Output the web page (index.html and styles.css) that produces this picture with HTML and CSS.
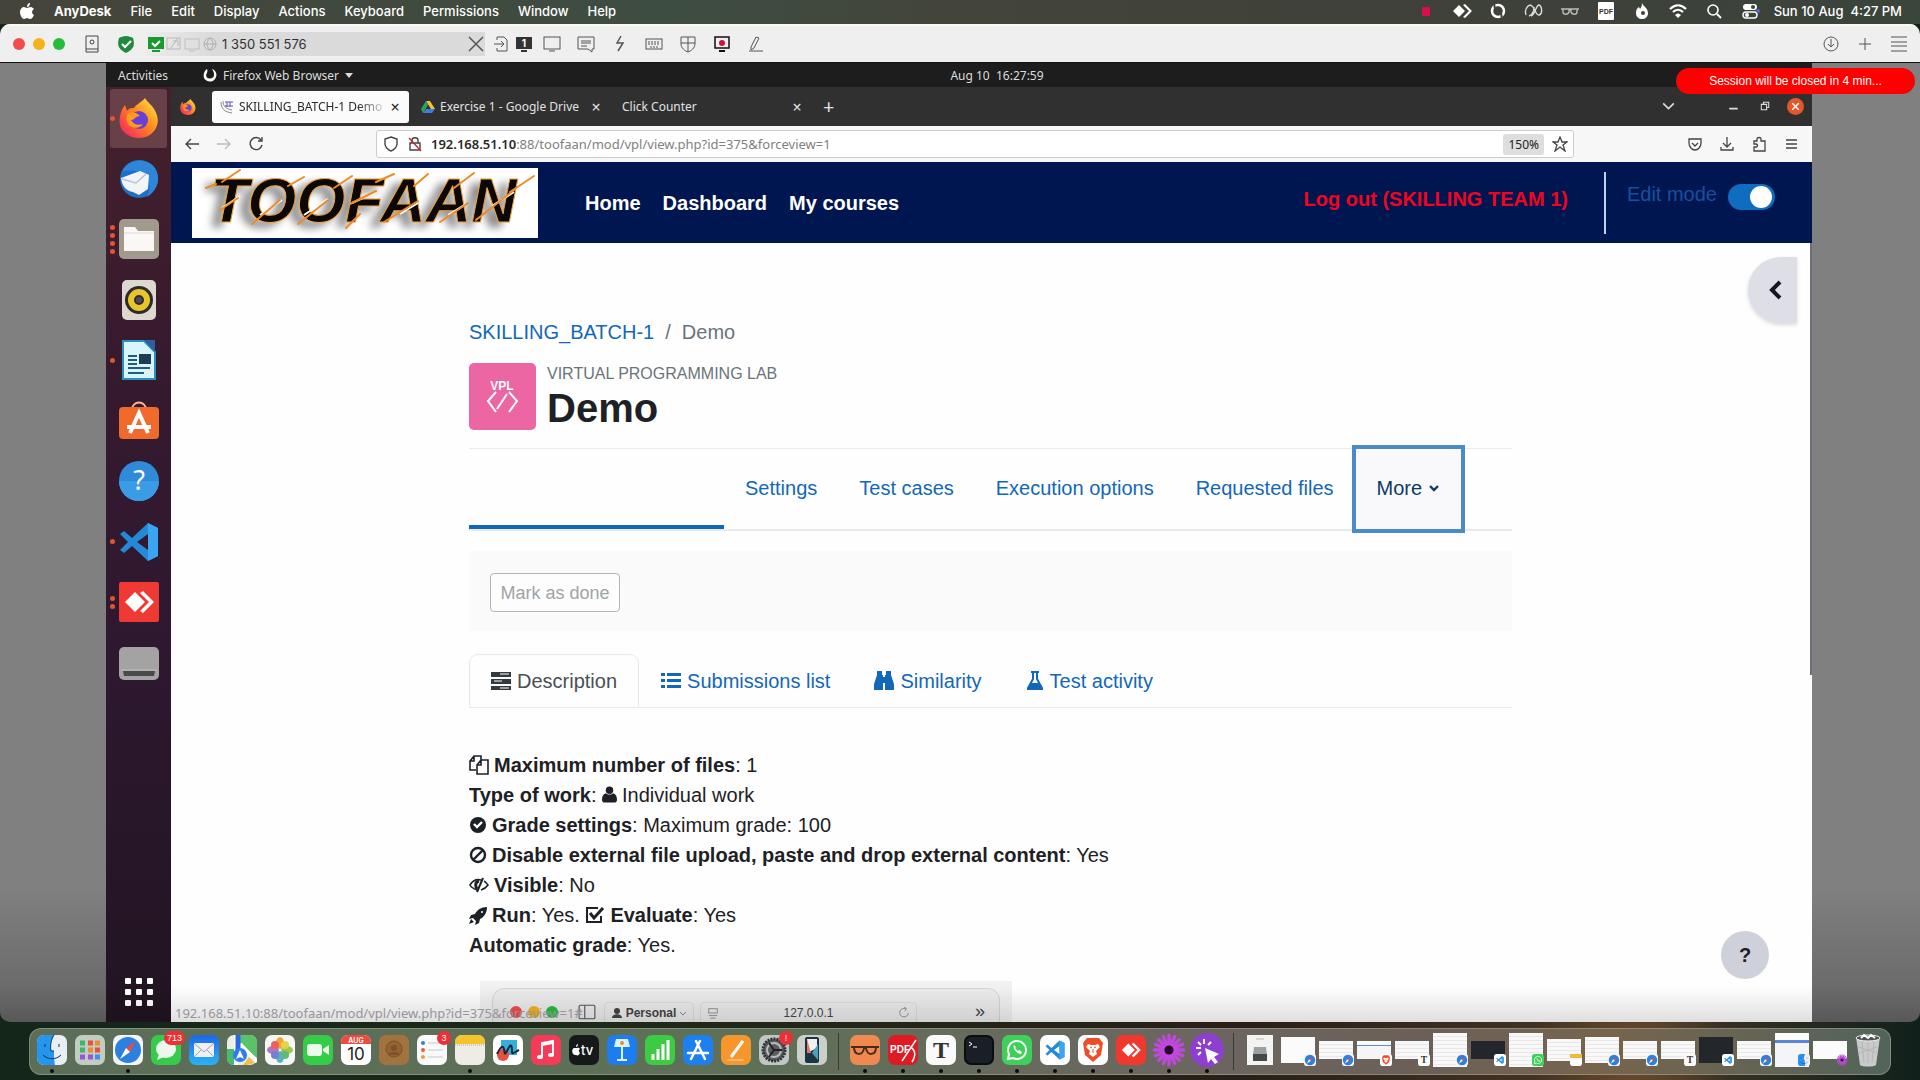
FILE: index.html
```html
<!DOCTYPE html>
<html lang="en">
<head>
    <meta charset="UTF-8">
    <title>Demo - Virtual programming lab</title>
    <link rel="stylesheet" href="styles.css">
</head>
<body>
    <!-- shared icons -->
    <svg class="sprite" aria-hidden="true">
        <defs>
            <linearGradient id="fire" x1="1" y1="0" x2="0" y2="1"><stop offset="0" stop-color="#fff04a"/><stop offset=".45" stop-color="#ff8a1c"/><stop offset="1" stop-color="#f5156c"/></linearGradient>
            <linearGradient id="blue" x1="0" y1="0" x2="0" y2="1"><stop offset="0" stop-color="#1e66e8"/><stop offset="1" stop-color="#27b4f5"/></linearGradient>
        </defs>
        <symbol id="i-firefox" viewBox="0 0 40 40">
            <path d="M26 0c3 5 6 6 9 11 4 6 5 13 2 19-3 6-9 10-17 10S5 36 2 30C-1 23 1 13 6 7l2 6c2-3 4-3 7-3 2-4 7-5 11-10z" fill="url(#fire)"/>
            <circle cx="20" cy="22" r="9" fill="#6a3fd8"/>
            <path d="M9 15c5-2 9 0 12 3-5 0-5 4-9 4 2 4 7 6 12 4-3 5-11 5-15 0-2-3-2-8 0-11z" fill="#ff9a1f"/>
        </symbol>
        <symbol id="i-vscode" viewBox="0 0 40 40">
            <path d="M29 1l10 5v28l-10 5L13 24l-8 7-4-3 8-8-8-8 4-3 8 7zm0 11L18 20l11 8z" fill="#2489d8"/>
            <path d="M29 1l10 5v28l-10 5z" fill="#3aa6f2"/>
        </symbol>
        <symbol id="i-anydesk" viewBox="0 0 40 40">
            <path d="M6 20l10-10 10 10-10 10z" fill="#fff"/><path d="M21 11l3-2 11 11-11 11-3-2 9-9z" fill="#fff"/>
        </symbol>
        <symbol id="i-safari" viewBox="0 0 30 30">
            <rect width="30" height="30" rx="7" fill="#f2f4f6"/><circle cx="15" cy="15" r="13" fill="#2b80e0"/>
            <path d="M23 6l-6 11-4-4z" fill="#f1483f"/><path d="M7 24l6-11 4 4z" fill="#fff"/>
        </symbol>
        <symbol id="i-brave" viewBox="0 0 30 30">
            <rect width="30" height="30" rx="7" fill="#fff"/><path d="M9 3h12l4 5-2 12-8 7-8-7L5 8z" fill="#ee4d27"/>
            <path d="M10 9l3 1h4l3-1 2 3-4 4 1 3-4 3-4-3 1-3-4-4z" fill="#fff"/><path d="M12 12l2 1M18 12l-2 1M15 14v4" stroke="#ee4d27"/>
        </symbol>
        <symbol id="i-flower" viewBox="0 0 30 30">
            <g stroke="#c048dd" stroke-width="3" stroke-linecap="round"><path d="M15 2v26M2 15h26M6 6l18 18M24 6L6 24M10 3l10 24M20 3L10 27M3 10l24 10M3 20l24-10"/></g>
            <circle cx="15" cy="15" r="4" fill="#28092e"/>
        </symbol>
        <symbol id="i-typora" viewBox="0 0 30 30">
            <rect width="30" height="30" rx="7" fill="#fafafa"/><text x="15" y="23" text-anchor="middle" font-family="Liberation Serif" font-size="24" font-weight="700" fill="#333">T</text>
        </symbol>
        <symbol id="i-whatsapp" viewBox="0 0 30 30">
            <rect width="30" height="30" rx="7" fill="#3fd05a"/><path d="M6 24l1-5a9 9 0 1 1 4 4z" fill="none" stroke="#fff" stroke-width="2"/>
            <path d="M12 10c-2 3 3 9 7 9l1-2-3-2-1 1-3-3 1-1z" fill="#fff"/>
        </symbol>
        <symbol id="i-finder" viewBox="0 0 30 30">
            <rect width="30" height="30" rx="7" fill="#e7eef5"/><path d="M7 0h10c-3 5-4 10-3 16h3c0 5 0 9 1 14H7a7 7 0 0 1-7-7V7a7 7 0 0 1 7-7z" fill="#2496ef"/>
            <path d="M8 9v3M22 9v3M6 20c5 5 13 5 18 0M17 0c-3 5-4 10-3 16h3" fill="none" stroke="#17324a" stroke-width="1"/>
        </symbol>
    </svg>

    <header class="menubar">
        <svg class="apple" viewBox="0 0 14 16"><path d="M10 0c0 2-1 4-3 4 0-2 1-4 3-4zM7 5c1 0 2-1 4-1 1 0 2 1 3 2-3 2-2 5 0 6-1 2-2 4-4 4-1 0-2-1-3-1s-2 1-3 1C2 16 0 12 0 9c0-3 2-5 4-5 1 0 2 1 3 1z" fill="#fff"/></svg>
        <nav class="menus">
            <button class="app-name">AnyDesk</button>
            <button>File</button>
            <button>Edit</button>
            <button>Display</button>
            <button>Actions</button>
            <button>Keyboard</button>
            <button>Permissions</button>
            <button>Window</button>
            <button>Help</button>
        </nav>
        <div class="tray">
            <svg viewBox="0 0 20 20"><rect x="6" y="6" width="8" height="9" rx="1" fill="#d80f4c"/></svg>
            <svg viewBox="0 0 20 20"><path d="M1 10l6-6 6 6-6 6zM11 4l2-1 7 7-7 7-2-1 6-6z" fill="#fff"/></svg>
            <svg viewBox="0 0 20 20"><circle cx="10" cy="10" r="6" fill="none" stroke="#fff" stroke-width="2.5"/><path d="M6 2l1 6M14 18l-1-6" stroke="#43433d" stroke-width="2"/></svg>
            <svg viewBox="0 0 20 20"><path d="M2 14C0 8 5 2 8 5c3 2 4 10 7 9 4-1 3-9 0-10-3 0-4 10-8 11M10 6c0 4-2 8-5 9" fill="none" stroke="#ddd" stroke-width="1.4"/></svg>
            <svg viewBox="0 0 20 20"><path d="M1 8h18M3 8v3c0 3 5 3 6 0V9h2v2c1 3 6 3 6 0V8" fill="none" stroke="#bbb" stroke-width="1.4"/></svg>
            <svg viewBox="0 0 20 20"><rect x="2" y="1" width="16" height="18" rx="1" fill="#fff"/><text x="10" y="13" text-anchor="middle" font-family="Liberation Sans" font-size="7" font-weight="700" fill="#333">PDF</text></svg>
            <svg viewBox="0 0 20 20"><path d="M10 2c1 3 6 5 6 10 0 4-3 6-6 6s-6-2-6-6c0-3 1-5 3-6l1 2c1-1 2-3 2-6z" fill="#fff"/><circle cx="11" cy="12" r="2" fill="#43433d"/></svg>
            <svg viewBox="0 0 20 20"><path d="M2 8c5-5 11-5 16 0M5 11c3-3 7-3 10 0" fill="none" stroke="#fff" stroke-width="2.2"/><path d="M7 14c2-2 4-2 6 0l-3 3z" fill="#fff"/></svg>
            <svg viewBox="0 0 20 20"><circle cx="9" cy="9" r="5" fill="none" stroke="#fff" stroke-width="1.6"/><path d="M13 13l4 4" stroke="#fff" stroke-width="2"/></svg>
            <svg viewBox="0 0 20 20"><rect x="3" y="3" width="14" height="6" rx="3" fill="#fff"/><circle cx="13" cy="6" r="2" fill="#43433d"/><rect x="3" y="11" width="14" height="6" rx="3" fill="none" stroke="#fff" stroke-width="1.4"/><circle cx="7" cy="14" r="2" fill="#fff"/><circle cx="18" cy="10" r="2" fill="#6259e0"/></svg>
        </div>
        <span class="mac-clock">Sun 10 Aug&nbsp; 4:27 PM</span>
    </header>

    <div class="anydesk">
        <div class="toolbar">
            <div class="lights"><i class="red"></i><i class="yellow"></i><i class="green"></i></div>
            <svg class="book" viewBox="0 0 18 18"><path d="M3 1h12v16H3zM3 14h12" fill="none" stroke="#444"/><circle cx="9" cy="7" r="2" fill="none" stroke="#444"/></svg>
            <svg class="secure" viewBox="0 0 18 18"><path d="M9 1c3 0 5 1 7 2 2 7 1 11-7 15C1 14 0 10 2 3c2-1 4-2 7-2z" fill="#1f8a3b"/><path d="M5 9l3 3 6-6" fill="none" stroke="#fff" stroke-width="2"/></svg>
            <label class="address">
                <svg viewBox="0 0 18 18"><rect x="1" y="2" width="16" height="12" fill="#189a2c"/><path d="M5 8l3 3 5-5" fill="none" stroke="#fff" stroke-width="2"/><path d="M5 16h8" stroke="#189a2c" stroke-width="2"/></svg>
                <svg viewBox="0 0 18 18" fill="none" stroke="#b8b8b8"><rect x="2" y="3" width="13" height="11"/><path d="M5 14l8-11M8 6h5v5"/></svg>
                <svg viewBox="0 0 18 18" fill="none" stroke="#c0c0c0"><rect x="2" y="4" width="14" height="10"/><path d="M6 16h6"/></svg>
                <svg viewBox="0 0 18 18" fill="none" stroke="#b0b0b0"><circle cx="9" cy="9" r="6"/><path d="M3 9h12M9 3c-4 4-4 8 0 12 4-4 4-8 0-12"/></svg>
                <input type="text" value="1 350 551 576" aria-label="Remote address">
                <button aria-label="Disconnect"><svg viewBox="0 0 18 18"><path d="M2 2l14 14M16 2L2 16" stroke="#555" stroke-width="1.5"/></svg></button>
            </label>
            <div class="tools">
                <button class="narrow" aria-label="File transfer"><svg viewBox="0 0 18 18" fill="none" stroke="#555"><path d="M4 5V2h7l3 3v11H4v-3M1 9h9M8 6l3 3-3 3"/></svg></button>
                <button class="narrow" aria-label="Monitor 1"><svg viewBox="0 0 18 18"><rect x="1" y="2" width="16" height="12" fill="#333"/><path d="M6 16h6" stroke="#333" stroke-width="2"/><text x="9" y="12" text-anchor="middle" font-family="Inter" font-size="10" font-weight="700" fill="#fff">1</text></svg></button>
                <button aria-label="Screen"><svg viewBox="0 0 18 18" fill="none" stroke="#555"><rect x="1" y="2" width="16" height="12"/><path d="M6 16h6"/></svg></button>
                <button aria-label="Chat"><svg viewBox="0 0 18 18" fill="none" stroke="#555"><path d="M1 2h16v12h-2v3l-4-3H1zM4 6h10M4 8h10M4 11h6"/></svg></button>
                <button aria-label="Actions"><svg viewBox="0 0 18 18" fill="none" stroke="#555" stroke-width="1.5"><path d="M10 1L6 8h6l-5 8"/></svg></button>
                <button aria-label="Keyboard"><svg viewBox="0 0 18 18" fill="none" stroke="#555"><rect x="1" y="4" width="16" height="10"/><path d="M3 7h12M3 9h12M5 12h8" stroke-dasharray="2 1"/></svg></button>
                <button aria-label="Permissions"><svg viewBox="0 0 18 18" fill="none" stroke="#555"><path d="M2 2h14v7c0 4-4 7-7 8-3-1-7-4-7-8zM9 2v15M2 8h14"/></svg></button>
                <button aria-label="Record"><svg viewBox="0 0 18 18"><rect x="2" y="2" width="14" height="11" fill="none" stroke="#111" stroke-width="1.5"/><path d="M6 16h6" stroke="#111" stroke-width="2"/><circle cx="9" cy="8" r="3" fill="#cf1238"/></svg></button>
                <button aria-label="Whiteboard"><svg viewBox="0 0 18 18" fill="none" stroke="#555"><path d="M4 12L9 2l3 1-5 10-3 2zM2 16h14"/></svg></button>
            </div>
            <div class="tools tools-right">
                <button aria-label="Install"><svg viewBox="0 0 18 18" fill="none" stroke="#555"><circle cx="9" cy="9" r="7"/><path d="M9 4v7M6 9l3 3 3-3"/></svg></button>
                <button aria-label="New"><svg viewBox="0 0 18 18" stroke="#555"><path d="M9 3v12M3 9h12"/></svg></button>
                <button aria-label="Menu"><svg viewBox="0 0 18 18" stroke="#555"><path d="M1 2h16M1 7h16M1 11h16M1 16h16"/></svg></button>
            </div>
        </div>

        <div class="viewport">
            <div class="session-note">Session will be closed in 4 min...</div>

            <div class="desktop">
                <div class="topbar">
                    <div class="topbar-left">
                        <span>Activities</span>
                        <span class="current-app">
                            <svg viewBox="0 0 14 14"><path d="M4 1c-3 2-4 6-3 9 2 4 8 5 11 1 3-4 1-9-3-10 1 2 2 3 2 5a4 4 0 0 1-8 1c1-2 2-4 1-6z" fill="#fff"/></svg>
                            Firefox Web Browser
                            <i class="caret"></i>
                        </span>
                    </div>
                    <span>Aug 10&nbsp; 16:27:59</span>
                </div>

                <div class="workspace">
                    <aside class="launcher">
                        <div class="launcher-apps">
                            <button class="active" aria-label="Firefox"><span class="dots"><i></i></span><svg viewBox="0 0 40 40"><use href="#i-firefox"/></svg></button>
                            <button aria-label="Thunderbird"><svg viewBox="0 0 40 40"><circle cx="20" cy="20" r="19" fill="#1c70c8"/><path d="M3 13C9 0 28-2 36 9c6 10 3 21-8 29 5-10 3-20-6-24-7-3-14-3-19-1z" fill="#2f86d8"/><path d="M2 19l19-7 9 4-1 14-9 6-6-3C7 32 3 27 2 19z" fill="#f2f4f8"/><path d="M3 20l14 4 10-9" fill="none" stroke="#b7c4d6" stroke-width="1.5"/></svg></button>
                            <button aria-label="Files"><span class="dots"><i></i><i></i><i></i><i></i></span><svg viewBox="0 0 40 40"><rect width="40" height="40" rx="5" fill="#a09a8c"/><path d="M5 8h11l3 4h16v20H5z" fill="#fbf7f5"/><path d="M5 14h30" stroke="#e2dcd8"/></svg></button>
                            <button aria-label="Rhythmbox"><svg viewBox="0 0 40 40"><rect x="3" width="34" height="40" rx="5" fill="#ddd8d0"/><circle cx="20" cy="20" r="14" fill="#2d2b2a"/><circle cx="20" cy="20" r="8" fill="none" stroke="#e9c52c" stroke-width="6"/><circle cx="20" cy="20" r="3" fill="#4a4a5a"/></svg></button>
                            <button aria-label="Writer"><span class="dots"><i></i></span><svg viewBox="0 0 40 40"><path d="M4 1h21l11 11v27H4z" fill="#d9f4fb" stroke="#2692c4" stroke-width="2"/><path d="M25 0h11v12z" fill="#2c5f9e"/><path d="M9 16h9M9 20h9M9 24h9M9 28h22M9 33h16" stroke="#205c7e" stroke-width="2"/><path d="M20 14h12v10H20z" fill="#1b3d55"/></svg></button>
                            <button aria-label="Software"><svg viewBox="0 0 40 40"><path d="M13 9c0-10 14-10 14 0" fill="none" stroke="#f4b79a" stroke-width="2"/><rect y="6" width="40" height="32" rx="4" fill="#f06a2c"/><path d="M11 32l9-20 9 20M8 26h24" fill="none" stroke="#fff" stroke-width="4"/></svg></button>
                            <button aria-label="Help"><svg viewBox="0 0 40 40"><circle cx="20" cy="20" r="20" fill="#2f8ad8"/><path d="M0 20h40a20 20 0 0 1-40 0z" fill="#3a9ce6"/><text x="20" y="29" text-anchor="middle" font-family="Noto Sans" font-size="27" fill="#fff">?</text></svg></button>
                            <button aria-label="Visual Studio Code"><span class="dots"><i></i></span><svg viewBox="0 0 40 40"><use href="#i-vscode"/></svg></button>
                            <button aria-label="AnyDesk"><span class="dots"><i></i><i></i></span><svg viewBox="0 0 40 40"><rect width="40" height="40" rx="2" fill="#ef3a34"/><use href="#i-anydesk"/></svg></button>
                            <button aria-label="Disk"><svg viewBox="0 0 40 40"><rect y="4" width="40" height="33" rx="5" fill="#a3a3a3"/><path d="M4 28h32l-1 5H5z" fill="#4a4a4a"/><path d="M2 27h36" stroke="#bdbdbd"/></svg></button>
                        </div>
                        <button class="show-apps" aria-label="Show Applications"><i></i><i></i><i></i><i></i><i></i><i></i><i></i><i></i><i></i></button>
                    </aside>

                    <div class="browser">
                        <div class="tabstrip">
                            <div class="pinned"><svg viewBox="0 0 40 40"><use href="#i-firefox"/></svg></div>
                            <div class="tab selected">
                                <svg viewBox="0 0 14 14"><path d="M1 2c0 6 3 10 11 11M3 1c0 5 3 8 9 9" fill="none" stroke="#888"/><path d="M5 2h8M7 2v5M10 2v5M5 6h8" stroke="#5a55b0"/></svg>
                                <span class="title">SKILLING_BATCH-1 Demo</span>
                                <button aria-label="Close tab">×</button>
                            </div>
                            <div class="tab">
                                <svg viewBox="0 0 14 14"><path d="M5 1h4l5 8h-4z" fill="#f7c32e"/><path d="M5 1L0 9l2 4 5-8z" fill="#2aa65a"/><path d="M2 13h9l3-4H5z" fill="#3a7de8"/></svg>
                                <span class="title">Exercise 1 - Google Drive</span>
                                <button aria-label="Close tab">×</button>
                            </div>
                            <div class="tab">
                                <span class="title">Click Counter</span>
                                <button aria-label="Close tab">×</button>
                            </div>
                            <button class="new-tab" aria-label="New tab">+</button>
                            <div class="window-buttons">
                                <button class="list-tabs" aria-label="List tabs"><svg viewBox="0 0 16 16"><path d="M3 5l5 5 5-5" fill="none" stroke="#ddd" stroke-width="1.5"/></svg></button>
                                <button aria-label="Minimize"><svg viewBox="0 0 16 16"><path d="M4 10h8" stroke="#ddd" stroke-width="1.5"/></svg></button>
                                <button aria-label="Restore"><svg viewBox="0 0 16 16" fill="none" stroke="#ddd"><path d="M5 6h5v5H5zM7 6V4h5v5h-2"/></svg></button>
                                <button aria-label="Close"><svg viewBox="0 0 16 16"><circle cx="8" cy="8" r="8" fill="#e4572c"/><path d="M5 5l6 6M11 5l-6 6" stroke="#fff" stroke-width="1.4"/></svg></button>
                            </div>
                        </div>

                        <div class="navbar">
                            <div class="nav-buttons">
                                <button aria-label="Back"><svg viewBox="0 0 16 16" fill="none" stroke="#444" stroke-width="1.4"><path d="M15 8H2M7 3L2 8l5 5"/></svg></button>
                                <button aria-label="Forward"><svg viewBox="0 0 16 16" fill="none" stroke="#bbb" stroke-width="1.4"><path d="M1 8h13M9 3l5 5-5 5"/></svg></button>
                                <button aria-label="Reload"><svg viewBox="0 0 16 16" fill="none" stroke="#444" stroke-width="1.4"><path d="M13 4a6 6 0 1 0 1 5M14 1v4h-4"/></svg></button>
                            </div>
                            <div class="urlbar">
                                <svg viewBox="0 0 16 16" fill="none" stroke="#444" stroke-width="1.4"><path d="M8 1l6 2v5c0 3-3 6-6 7-3-1-6-4-6-7V3z"/></svg>
                                <svg viewBox="0 0 16 16" fill="none" stroke="#444" stroke-width="1.4"><path d="M3 7h10v7H3zM5 7V4c0-3 6-3 6 0v3"/><path d="M2 2l12 13" stroke="#d0203e"/></svg>
                                <span class="url"><b>192.168.51.10</b>:88/toofaan/mod/vpl/view.php?id=375&amp;forceview=1</span>
                                <button class="zoom">150%</button>
                                <svg viewBox="0 0 16 16" fill="none" stroke="#444" stroke-width="1.3"><path d="M8 1l2 5h5l-4 3 2 6-5-4-5 4 2-6-4-3h5z"/></svg>
                            </div>
                            <div class="nav-buttons nav-extra">
                                <button aria-label="Pocket"><svg viewBox="0 0 16 16" fill="none" stroke="#444" stroke-width="1.3"><path d="M2 3h12v4c0 4-3 7-6 7S2 11 2 7zM5 7l3 3 3-3"/></svg></button>
                                <button aria-label="Downloads"><svg viewBox="0 0 16 16" fill="none" stroke="#444" stroke-width="1.3"><path d="M8 1v9M4 7l4 4 4-4M2 11v3h12v-3"/></svg></button>
                                <button aria-label="Extensions"><svg viewBox="0 0 16 16" fill="none" stroke="#444" stroke-width="1.3"><path d="M3 5h3V3c0-2 4-2 4 0v2h4v10H3v-4h2c2 0 2-3 0-3H3z"/></svg></button>
                                <button aria-label="Menu"><svg viewBox="0 0 16 16" stroke="#444" stroke-width="1.3"><path d="M3 4h11M3 8h11M3 12h11"/></svg></button>
                            </div>
                        </div>

                        <div class="page">
                            <header class="site-header">
                                <a href="#" class="logo" aria-label="Toofaan">
                                    <svg viewBox="0 0 346 70">
                                        <rect width="346" height="70" fill="#fff"/>
                                        <text x="18" y="54" class="logo-text">TOOFAAN</text>
                                        <g stroke="#fff" stroke-width="2"><path d="M30 40l18-12M68 47l22-15M112 47l24-16M160 35l24-11M208 46l18-11M256 47l18-11M300 38l22-14"/></g>
                                        <g stroke="#f08a26" stroke-width="2" stroke-linecap="round"><path d="M14 20l10-4M30 14l18-12M28 42l18-12M60 56l28-24M96 18l16-9M106 56l30-24M142 20l18-12M154 60l14-14M158 36l26-13M184 14l18-8M192 54l34-21M222 18l14-12M248 54l28-19M262 20l20-15M284 52l38-30M318 24l24-16"/></g>
                                    </svg>
                                </a>
                                <nav class="site-nav">
                                    <a href="#">Home</a>
                                    <a href="#">Dashboard</a>
                                    <a href="#">My courses</a>
                                </nav>
                                <a href="#" class="logout">Log out (SKILLING TEAM 1)</a>
                                <div class="edit-mode">
                                    <label for="editMode">Edit mode</label>
                                    <input type="checkbox" id="editMode" checked>
                                </div>
                            </header>

                            <button class="drawer-toggle" aria-label="Open block drawer"><svg viewBox="0 0 16 20"><path d="M12 2L4 10l8 8" fill="none" stroke="#16161e" stroke-width="4"/></svg></button>
                            <div class="scrollbar"></div>

                            <main class="content">
                                <div class="breadcrumb"><a href="#">SKILLING_BATCH-1</a><span>/</span><span>Demo</span></div>
                                <div class="activity-title">
                                    <svg viewBox="0 0 67 67"><rect width="67" height="67" rx="5" fill="#eb66a2"/><text x="33" y="27" text-anchor="middle" font-family="Liberation Sans" font-size="12" font-weight="700" fill="#fff">VPL</text><path d="M27 29l-8 9 8 11M40 29l8 9-8 11M38 31L28 46" fill="none" stroke="#fff" stroke-width="2"/></svg>
                                    <div>
                                        <div class="activity-type">Virtual programming lab</div>
                                        <h1>Demo</h1>
                                    </div>
                                </div>

                                <nav class="secondary-nav">
                                    <a href="#" class="current" aria-label="Virtual programming lab"></a>
                                    <a href="#">Settings</a>
                                    <a href="#">Test cases</a>
                                    <a href="#">Execution options</a>
                                    <a href="#">Requested files</a>
                                    <button class="more">More <svg viewBox="0 0 12 12"><path d="M2 4l4 4 4-4" fill="none" stroke="#0b3a66" stroke-width="2.4"/></svg></button>
                                </nav>

                                <div class="activity-header">
                                    <button disabled>Mark as done</button>
                                </div>

                                <nav class="tabs">
                                    <a href="#" class="current"><svg viewBox="0 0 20 20"><path d="M0 1h20v5H0zM0 8h20v5H0zM0 15h20v4H0z" fill="#343a40"/><path d="M9 3h9M3 10h8M9 17h9" stroke="#fff" stroke-width="1"/></svg>Description</a>
                                    <a href="#"><svg viewBox="0 0 20 20" fill="#1268b8"><path d="M0 2h4v3H0zM0 8h4v3H0zM0 14h4v3H0zM6 2h14v3H6zM6 8h14v3H6zM6 14h14v3H6z"/></svg>Submissions list</a>
                                    <a href="#"><svg viewBox="0 0 20 20" fill="#1268b8"><path d="M3 0h5v4h1v15H0v-6l3-9zM12 0h5v4l3 9v6h-9V4h1zM8 6h4v6H8z"/></svg>Similarity</a>
                                    <a href="#"><svg class="flask" viewBox="0 0 18 20"><path d="M5 1h8M7 1v7L2 17v1h14v-1l-5-9V1" fill="none" stroke="#1268b8" stroke-width="2"/><path d="M5 12h8l4 7H1z" fill="#1268b8"/></svg>Test activity</a>
                                </nav>

                                <div class="details">
                                    <p><svg viewBox="0 0 20 20" fill="none" stroke="#1d2125" stroke-width="1.6"><path d="M7 15H1V6l4-5h7v4M5 1v5H1M8 10l4-5h7v14H8zM12 5v5H8"/></svg><b>Maximum number of files</b>: 1</p>
                                    <p><b>Type of work</b>: <svg class="small" viewBox="0 0 16 20" fill="#1d2125"><circle cx="8" cy="5" r="4"/><path d="M4 8c2 2 6 2 8 0 3 1 4 4 4 7 0 2-1 3-3 3H3c-2 0-3-1-3-3 0-3 1-6 4-7z"/></svg>Individual work</p>
                                    <p><svg class="mid" viewBox="0 0 18 20"><circle cx="9" cy="10" r="8" fill="#1d2125"/><path d="M5 9l3 3 5-5" fill="none" stroke="#fff" stroke-width="2.4"/></svg><b>Grade settings</b>: Maximum grade: 100</p>
                                    <p><svg class="mid" viewBox="0 0 18 20" fill="none" stroke="#1d2125" stroke-width="2.4"><circle cx="9" cy="10" r="7"/><path d="M4 15L14 5"/></svg><b>Disable external file upload, paste and drop external content</b>: Yes</p>
                                    <p><svg viewBox="0 0 20 20" fill="none" stroke="#1d2125" stroke-width="1.6"><path d="M8 15C5 14 2 12 1 10c3-5 7-6 11-5M15 6c2 1 3 3 4 4-2 3-4 4-7 5"/><path d="M14 3L8 17" stroke-width="2"/><path d="M10 6c-4 1-4 5-2 8" stroke-width="3"/></svg><b>Visible</b>: No</p>
                                    <p><svg class="mid" viewBox="0 0 18 20"><path d="M18 2c-6 0-10 3-12 7l-4 1-2 4 4-1 3 3-1 4 4-2 1-4c4-2 7-6 7-12zM0 19l2-5 3 3z" fill="#1d2125"/><circle cx="13" cy="7" r="1" fill="#fff"/></svg><b>Run</b>: Yes. <svg viewBox="0 0 20 20" fill="none" stroke="#1d2125"><path d="M16 11v6H2V3h11" stroke-width="2"/><path d="M5 8l4 5 9-10" stroke-width="3"/></svg><b>Evaluate</b>: Yes</p>
                                    <p><b>Automatic grade</b>: Yes.</p>
                                </div>

                                <div class="shot">
                                    <div class="shot-bar">
                                        <div class="lights"><i class="red"></i><i class="yellow"></i><i class="green"></i></div>
                                        <svg viewBox="0 0 16 16" fill="none" stroke="#555"><rect x="1" y="2" width="14" height="12" rx="1"/><path d="M6 2v12"/></svg>
                                        <span class="profile"><svg viewBox="0 0 12 12" fill="#444"><circle cx="6" cy="4" r="3"/><path d="M1 11c0-5 10-5 10 0z"/></svg>Personal<svg class="drop" viewBox="0 0 8 8"><path d="M1 3l3 3 3-3" fill="none" stroke="#888"/></svg></span>
                                        <span class="host"><svg viewBox="0 0 14 14" fill="none" stroke="#888"><rect x="2" y="2" width="10" height="5"/><path d="M2 10h10M4 13h6"/></svg><em>127.0.0.1</em><svg viewBox="0 0 14 14" fill="none" stroke="#888"><path d="M12 7a5 5 0 1 1-3-5M7 0l3 2-2 3"/></svg></span>
                                        <span class="chev">»</span>
                                    </div>
                                </div>
                            </main>

                            <div class="status">192.168.51.10:88/toofaan/mod/vpl/view.php?id=375&amp;forceview=1#</div>
                            <button class="help">?</button>
                        </div>
                    </div>
                </div>
            </div>
        </div>
    </div>

    <footer class="dock-area">
        <div class="dock">
            <div class="item running"><svg viewBox="0 0 30 30"><use href="#i-finder"/></svg></div>
            <div class="item"><svg viewBox="0 0 30 30"><rect width="30" height="30" rx="7" fill="#c3ccc0"/><g stroke-width="5"><path d="M5 8h5M5 15h5" stroke="#3db66b"/><path d="M13 8h5M20 15h5" stroke="#e8503f"/><path d="M20 8h5M13 15h5" stroke="#ef8a36"/><path d="M5 22h5M13 22h5" stroke="#9a56d8"/><path d="M20 22h5" stroke="#3f8ff0"/></g></svg></div>
            <div class="item running"><svg viewBox="0 0 30 30"><use href="#i-safari"/></svg></div>
            <div class="item"><svg viewBox="0 0 30 30"><rect width="30" height="30" rx="7" fill="#36cb4b"/><ellipse cx="15" cy="14" rx="10" ry="9" fill="#eef7ee"/><path d="M8 19l-2 6 7-3z" fill="#eef7ee"/></svg><span class="badge">713</span></div>
            <div class="item"><svg viewBox="0 0 30 30"><rect width="30" height="30" rx="7" fill="url(#blue)"/><path d="M5 8h20v14H5z" fill="#f0f0f0"/><path d="M5 8l10 9 10-9M5 22l7-7M25 22l-7-7" fill="none" stroke="#9aa5b0"/></svg></div>
            <div class="item"><svg viewBox="0 0 30 30"><rect width="30" height="30" rx="7" fill="#e9efe6"/><path d="M12 0h11c4 0 7 3 7 7v16L12 8z" fill="#59c26b"/><path d="M0 14h8v16H7c-4 0-7-3-7-7z" fill="#48b96e"/><path d="M9 0v30M13 9l17 18" stroke="#fff" stroke-width="4"/><path d="M11 0v16" stroke="#2868e4" stroke-width="5"/><path d="M22 22l6 6-8 2h-4z" fill="#efc04b"/><circle cx="13" cy="20" r="7" fill="#2f7cf2"/><path d="M13 15l4 9-4-2-4 2z" fill="#fff"/></svg></div>
            <div class="item"><svg viewBox="0 0 30 30"><rect width="30" height="30" rx="7" fill="#f7f7f5"/><g opacity=".9"><ellipse cx="15" cy="8" rx="4" ry="6" fill="#f49a23"/><ellipse cx="15" cy="22" rx="4" ry="6" fill="#4aa8c9"/><ellipse cx="8" cy="15" rx="6" ry="4" fill="#a668c6"/><ellipse cx="22" cy="15" rx="6" ry="4" fill="#8fc63d"/><circle cx="20" cy="10" r="4" fill="#e6cf35"/><circle cx="10" cy="10" r="4" fill="#ed5145"/><circle cx="20" cy="20" r="4" fill="#51b36d"/><circle cx="10" cy="20" r="4" fill="#6674cc"/></g></svg></div>
            <div class="item"><svg viewBox="0 0 30 30"><rect width="30" height="30" rx="7" fill="#35cc48"/><rect x="4" y="9" width="15" height="12" rx="3" fill="#eafbea"/><path d="M20 14l6-4v10l-6-4z" fill="#eafbea"/></svg></div>
            <div class="item"><svg viewBox="0 0 30 30"><rect width="30" height="30" rx="7" fill="#fff"/><path d="M7 0h16a7 7 0 0 1 7 7v2H0V7a7 7 0 0 1 7-7z" fill="#ee4b3f"/><text x="15" y="8" text-anchor="middle" font-family="Inter" font-size="7" font-weight="600" fill="#fff">AUG</text><text x="15" y="25" text-anchor="middle" font-family="Inter" font-size="17" fill="#222">10</text></svg></div>
            <div class="item"><svg viewBox="0 0 30 30"><rect width="30" height="30" rx="7" fill="#a2733f"/><circle cx="15" cy="14" r="8" fill="#936432" stroke="#7b5127"/><circle cx="15" cy="13" r="3" fill="#7b5127"/><path d="M9 20c2-4 10-4 12 0" fill="#7b5127"/></svg></div>
            <div class="item"><svg viewBox="0 0 30 30"><rect width="30" height="30" rx="7" fill="#fafafa"/><circle cx="6" cy="8" r="2" fill="#2f7bf0"/><circle cx="6" cy="15" r="2" fill="#ef5a42"/><circle cx="6" cy="22" r="2" fill="#ef9a3d"/><path d="M11 8h15M11 15h15M11 22h15" stroke="#c7c7c7"/></svg><span class="badge">3</span></div>
            <div class="item running"><svg viewBox="0 0 30 30"><rect width="30" height="30" rx="7" fill="#efebe6"/><path d="M7 0h16a7 7 0 0 1 7 7v2H0V7a7 7 0 0 1 7-7z" fill="#f3c42c"/><path d="M0 10h30" stroke="#aaa" stroke-dasharray="1 1"/></svg></div>
            <div class="item"><svg viewBox="0 0 30 30"><rect width="30" height="30" rx="7" fill="#fff"/><path d="M8 5h16v15H8z" fill="#35aede"/><circle cx="10" cy="20" r="6" fill="#e8503f"/><path d="M4 19c4-8 6-9 7-5s0 8 4 0 4 0 4 3 3 0 7-2" fill="none" stroke="#152a3b" stroke-width="2"/></svg></div>
            <div class="item"><svg viewBox="0 0 30 30"><rect width="30" height="30" rx="7" fill="#f63a58"/><path d="M11 21V8l11-2v13" fill="none" stroke="#fff" stroke-width="2"/><path d="M11 8l11-2v3l-11 2z" fill="#fff"/><ellipse cx="9" cy="22" rx="3" ry="2" fill="#fff"/><ellipse cx="20" cy="20" rx="3" ry="2" fill="#fff"/></svg></div>
            <div class="item"><svg viewBox="0 0 30 30"><rect width="30" height="30" rx="7" fill="#16191a"/><path d="M9 9c0 2-1 3-2 3 0-2 1-3 2-3zM7 13c1 0 3-1 4 1-2 1-1 3 0 4-1 2-2 3-4 2-4 1-5-6-2-7z" fill="#fff"/><text x="12" y="20" font-family="Inter" font-size="13" font-weight="500" fill="#fff">tv</text></svg></div>
            <div class="item"><svg viewBox="0 0 30 30"><rect width="30" height="30" rx="7" fill="#1c7df0"/><path d="M9 4h12l2 8H7z" fill="#d8f1fa"/><path d="M15 12v13M10 25h10" stroke="#d8f1fa" stroke-width="2"/><circle cx="15" cy="8" r="2" fill="#e98b32"/></svg></div>
            <div class="item"><svg viewBox="0 0 30 30"><rect width="30" height="30" rx="7" fill="#3ccb42"/><path d="M8 25v-6M13 25V14M18 25V9M23 25V5" stroke="#fff" stroke-width="3"/></svg></div>
            <div class="item"><svg viewBox="0 0 30 30"><rect width="30" height="30" rx="7" fill="#1d80f0"/><path d="M17 6L8 24M13 6l9 18M5 18h20" stroke="#fff" stroke-width="2.5" stroke-linecap="round"/></svg></div>
            <div class="item"><svg viewBox="0 0 30 30"><rect width="30" height="30" rx="7" fill="#f6962b"/><path d="M22 6L10 22" stroke="#fff" stroke-width="3"/><path d="M6 25h17" stroke="#ffd8a8"/></svg></div>
            <div class="item"><svg viewBox="0 0 30 30"><rect width="30" height="30" rx="7" fill="#c2c5c5"/><circle cx="15" cy="15" r="11" fill="#5a5e60" stroke="#303335" stroke-width="3" stroke-dasharray="2 1"/><circle cx="15" cy="15" r="7" fill="none" stroke="#b9bcbd" stroke-width="2"/><path d="M15 15h8M15 15l-5-7M15 15l-5 7" stroke="#222" stroke-width="2"/></svg><span class="badge">!</span></div>
            <div class="item"><svg viewBox="0 0 30 30"><rect width="30" height="30" rx="7" fill="#ccd0ca"/><rect x="8" y="2" width="14" height="26" rx="2" fill="#1a3542"/><path d="M10 4h10v9l-10 5z" fill="#f0f0f0"/><path d="M10 4l4 14h-4z" fill="#e87a63"/><path d="M15 18l6-9v16z" fill="#4ba1c3"/></svg></div>
            <div class="divider"></div>
            <div class="item running"><svg viewBox="0 0 30 30"><rect width="30" height="30" rx="7" fill="#f0894f"/><path d="M1 12h28M4 12c0 9 9 9 10 1h2c1 8 10 8 10-1" fill="none" stroke="#4b2a18" stroke-width="2"/></svg></div>
            <div class="item running"><svg viewBox="0 0 30 30"><rect width="30" height="30" rx="7" fill="#de1a22"/><text x="2" y="18" font-family="Liberation Sans" font-size="10" font-weight="700" fill="#fff">PDF</text><path d="M28 5L14 26M22 12c8 4 4 12 2 15" fill="none" stroke="#fff" stroke-width="1.5"/></svg></div>
            <div class="item running"><svg viewBox="0 0 30 30"><use href="#i-typora"/></svg></div>
            <div class="item running"><svg viewBox="0 0 30 30"><rect x="1" y="1" width="28" height="28" rx="6" fill="#1a1e26" stroke="#0a0c10" stroke-width="2"/><path d="M5 7l3 2-3 2M9 12h4" fill="none" stroke="#fff"/></svg></div>
            <div class="item running"><svg viewBox="0 0 30 30"><use href="#i-whatsapp"/></svg></div>
            <div class="item running"><svg viewBox="0 0 30 30"><rect width="30" height="30" rx="7" fill="#fff"/><use href="#i-vscode" x="5" y="5" width="20" height="20"/></svg></div>
            <div class="item running"><svg viewBox="0 0 30 30"><use href="#i-brave"/></svg></div>
            <div class="item running"><svg viewBox="0 0 30 30"><rect width="30" height="30" rx="7" fill="#f0382d"/><use href="#i-anydesk" x="2" y="2" width="26" height="26"/></svg></div>
            <div class="item running"><svg class="wide" viewBox="0 0 30 30"><use href="#i-flower"/></svg></div>
            <div class="item running"><svg class="wide" viewBox="0 0 34 34"><circle cx="17" cy="17" r="17" fill="#8f3fcf"/><path d="M14 6v5M6 15h5M8 9l3 3M21 9l-3 3M8 22l3-3" stroke="#fff" stroke-width="2"/><path d="M15 15l14 6-5 3 4 5-3 2-4-5-3 4z" fill="#fff"/></svg></div>
            <div class="divider"></div>
            <div class="item"><svg viewBox="0 0 30 30"><path d="M2 0h26v30H2z" fill="#f3f3f1"/><path d="M9 12h12l1 8H8z" fill="#9da0a1"/><path d="M8 19h14v7H8z" fill="#44484a"/><path d="M11 4h8" stroke="#bbb"/></svg></div>
            <div class="item win h26"><svg class="mini" viewBox="0 0 30 30"><use href="#i-safari"/></svg></div>
            <div class="item win lines h18"><svg class="mini" viewBox="0 0 30 30"><use href="#i-safari"/></svg></div>
            <div class="item win blueline h18"><svg class="mini" viewBox="0 0 30 30"><use href="#i-brave"/></svg></div>
            <div class="item win lines h18"><svg class="mini" viewBox="0 0 30 30"><use href="#i-typora"/></svg></div>
            <div class="item win lines h34"><svg class="mini" viewBox="0 0 30 30"><use href="#i-safari"/></svg></div>
            <div class="item win dark h18"><svg class="mini" viewBox="0 0 30 30"><rect width="30" height="30" rx="7" fill="#fff"/><use href="#i-vscode" x="5" y="5" width="20" height="20"/></svg></div>
            <div class="item win lines h34"><svg class="mini" viewBox="0 0 30 30"><use href="#i-whatsapp"/></svg></div>
            <div class="item win lines h22"><svg class="mini" viewBox="0 0 30 30"><rect width="30" height="30" rx="7" fill="#fff"/><path d="M0 0h30v10H0z" fill="#efba36"/></svg></div>
            <div class="item win lines h26"><svg class="mini" viewBox="0 0 30 30"><use href="#i-safari"/></svg></div>
            <div class="item win lines h18"><svg class="mini" viewBox="0 0 30 30"><use href="#i-safari"/></svg></div>
            <div class="item win lines h18"><svg class="mini" viewBox="0 0 30 30"><use href="#i-typora"/></svg></div>
            <div class="item win dark h26"><svg class="mini" viewBox="0 0 30 30"><rect width="30" height="30" rx="7" fill="#fff"/><use href="#i-vscode" x="5" y="5" width="20" height="20"/></svg></div>
            <div class="item win lines h18"><svg class="mini" viewBox="0 0 30 30"><use href="#i-safari"/></svg></div>
            <div class="item win blueline h34"><svg class="mini" viewBox="0 0 30 30"><use href="#i-finder"/></svg></div>
            <div class="item win h18"><svg class="mini" viewBox="0 0 30 30"><use href="#i-flower"/></svg></div>
            <div class="item"><svg class="wide" viewBox="0 0 34 34"><path d="M5 4h24l-4 28c-2 2-14 2-16 0z" fill="#c9cbca"/><path d="M11 8l2 22M17 8v22M23 8l-2 22M7 14l20 6M8 20l18-6" stroke="#b4b8b6"/><ellipse cx="17" cy="5" rx="12" ry="3" fill="#4b5350" stroke="#eee"/><path d="M10 5l3-3 4 3 3-3 4 3" fill="none" stroke="#fff" stroke-width="2"/></svg></div>
        </div>
    </footer>
</body>
</html>
```
FILE: styles.css
```css
* {
    box-sizing: border-box;
}

body {
    margin: 0;
    height: 100vh;
    display: flex;
    flex-direction: column;
    overflow: hidden;
    font-family: "Liberation Sans", Arial, sans-serif;
    background: radial-gradient(circle at 85% 98%, #6a4a2c 0, transparent 5%),
                linear-gradient(90deg, #14251a, #1d2a1a 30%, #2a1f18 65%, #4a3826 85%, #10201a);
}

button {
    border: none;
    padding: 0;
    background: none;
    font: inherit;
    color: inherit;
}

a {
    text-decoration: none;
    color: #1268b8;
}

svg {
    display: block;
    flex: none;
}

.sprite {
    position: absolute;
    width: 0;
    height: 0;
}

/* Mac menu bar */
.menubar {
    height: 24px;
    flex: none;
    display: flex;
    align-items: center;
    padding: 0 18px 3px 20px;
    background: linear-gradient(90deg, #45443a, #3e4d42 35%, #43443a 50%, #3e403a 80%, #3a453c);
    color: #fff;
    font: 500 13px Inter, sans-serif;
}

.apple {
    width: 14px;
    height: 16px;
    margin-right: 20px;
}

.menus {
    display: flex;
    gap: 19px;
}

.app-name {
    font-weight: 700;
}

.tray {
    display: flex;
    gap: 16px;
    margin-left: auto;
    margin-right: 14px;
}

.tray svg {
    width: 20px;
    height: 20px;
}

/* AnyDesk window */
.anydesk {
    flex: 1;
    min-height: 0;
    display: flex;
    flex-direction: column;
    border-radius: 10px;
    overflow: hidden;
}

.toolbar {
    height: 39px;
    flex: none;
    display: flex;
    align-items: center;
    background: #efefef;
    border-top: 2px solid #faf9f4;
    border-bottom: 1px solid #111;
    padding: 0 4px 0 13px;
}

.lights {
    display: flex;
    gap: 8px;
}

.lights i {
    width: 12px;
    height: 12px;
    border-radius: 50%;
}

.red { background: #f24b4b; }
.yellow { background: #f5b21b; }
.green { background: #27bb3c; }

.book,
.secure {
    width: 18px;
    height: 18px;
    margin-left: 18px;
}

.secure {
    margin-left: 16px;
}

.address {
    display: flex;
    align-items: center;
    width: 338px;
    height: 24px;
    margin-left: 12px;
    background: linear-gradient(90deg, #ececec, #dadada 20%, #dadada);
}

.address svg {
    width: 18px;
    height: 18px;
}

.address input {
    flex: 1;
    min-width: 0;
    border: none;
    padding: 0;
    margin-left: 3px;
    background: none;
    font: 13px Inter, sans-serif;
    color: #333;
}

.tools {
    display: flex;
    margin-left: 6px;
}

.tools button {
    width: 34px;
    display: flex;
    justify-content: center;
}

.tools .narrow {
    width: 22px;
}

.tools svg {
    width: 18px;
    height: 18px;
}

.tools-right {
    margin-left: auto;
}

.viewport {
    flex: 1;
    min-height: 0;
    position: relative;
    padding: 0 108px 0 106px;
    background: linear-gradient(#808080 86%, #646464);
}

/* shade above the dock */
.viewport::after {
    content: "";
    position: absolute;
    left: 0;
    right: 0;
    bottom: 0;
    height: 36px;
    background: linear-gradient(transparent, rgba(0, 0, 0, 0.12));
    pointer-events: none;
}

.session-note {
    position: absolute;
    z-index: 2;
    top: 5px;
    right: 5px;
    width: 239px;
    height: 26px;
    border-radius: 13px;
    background: #fe0000;
    color: #fff;
    font-size: 12px;
    line-height: 26px;
    text-align: center;
}

/* Ubuntu desktop */
.desktop {
    height: 100%;
    display: flex;
    flex-direction: column;
    background: #1d1d1d;
    font-family: "Noto Sans", sans-serif;
}

.topbar {
    height: 24px;
    flex: none;
    display: grid;
    grid-template-columns: 52fr auto 48fr;
    align-items: center;
    padding-left: 12px;
    color: #dcdcdc;
    font-size: 12px;
}

.topbar-left {
    display: flex;
    gap: 35px;
}

.current-app {
    display: flex;
    align-items: center;
    gap: 6px;
}

.current-app svg {
    width: 14px;
    height: 14px;
}

.caret {
    border: 4px solid transparent;
    border-top: 5px solid #dcdcdc;
    border-bottom: 0;
}

.workspace {
    flex: 1;
    min-height: 0;
    display: flex;
}

.launcher {
    width: 65px;
    flex: none;
    display: flex;
    flex-direction: column;
    justify-content: space-between;
    background: linear-gradient(#45202c, #361a2e 30%, #2e1830 60%, #211421);
}

.launcher-apps {
    height: 605px;
    margin-top: 1px;
    display: flex;
    flex-direction: column;
}

.launcher-apps button {
    flex: 1;
    position: relative;
    display: flex;
    align-items: center;
    justify-content: center;
    margin: 1px 4px;
}

.launcher-apps .active {
    background: #684048;
    border-radius: 3px;
}

.launcher-apps svg {
    width: 40px;
    height: 40px;
}

.dots {
    position: absolute;
    left: 0;
    top: 0;
    bottom: 0;
    display: flex;
    flex-direction: column;
    justify-content: center;
    gap: 3px;
}

.dots i {
    width: 5px;
    height: 5px;
    border-radius: 50%;
    background: #e2552e;
}

.show-apps {
    align-self: center;
    display: grid;
    grid-template-columns: repeat(3, 6px);
    gap: 5px;
    margin-bottom: 16px;
}

.show-apps i {
    height: 6px;
    border-radius: 1px;
    background: #fff;
}

/* Firefox */
.browser {
    flex: 1;
    min-width: 0;
    display: flex;
    flex-direction: column;
}

.tabstrip {
    height: 39px;
    flex: none;
    display: flex;
    align-items: center;
    gap: 4px;
    background: #303030;
    color: #e2e2e2;
    font-size: 12px;
}

.pinned {
    width: 37px;
    padding-left: 9px;
}

.pinned svg {
    width: 16px;
    height: 16px;
}

.tab {
    width: 197px;
    height: 32px;
    display: flex;
    align-items: center;
    padding: 0 7px 0 8px;
    border-radius: 3px;
}

.tab.selected {
    background: #fbfbfb;
    color: #2a2a2a;
}

.tab svg {
    width: 14px;
    height: 14px;
    margin-right: 5px;
}

.tab .title {
    flex: 1;
    white-space: nowrap;
    overflow: hidden;
}

.tab.selected .title {
    mask-image: linear-gradient(90deg, #000 80%, transparent);
}

.tab button {
    width: 14px;
    font-size: 16px;
    line-height: 20px;
}

.new-tab {
    margin-left: 8px;
    font-size: 20px;
    line-height: 20px;
}

.window-buttons {
    display: flex;
    gap: 14px;
    margin-left: auto;
    margin-right: 8px;
}

.list-tabs {
    margin-right: 34px;
}

.window-buttons svg {
    width: 17px;
    height: 17px;
}

.navbar {
    height: 36px;
    flex: none;
    display: flex;
    align-items: center;
    background: #f7f7f7;
}

.nav-buttons {
    display: flex;
    gap: 16px;
    margin-left: 13px;
}

.nav-buttons svg {
    width: 16px;
    height: 16px;
}

.urlbar {
    flex: 1;
    height: 28px;
    display: flex;
    align-items: center;
    gap: 8px;
    margin: 0 113px 0 112px;
    padding: 0 5px 0 6px;
    border: 1px solid #ccc;
    border-radius: 3px;
    background: #fff;
    font-size: 13px;
    color: #808080;
}

.urlbar svg {
    width: 16px;
    height: 16px;
}

.url {
    flex: 1;
}

.url b {
    font-weight: 600;
    color: #2a2a2a;
}

.zoom {
    padding: 2px 5px;
    border-radius: 3px;
    background: #dedede;
    color: #222;
    font-size: 12px;
}

.nav-extra {
    margin: 0 13px 0 0;
}

/* Moodle page */
.page {
    flex: 1;
    min-height: 0;
    position: relative;
    overflow: hidden;
    background: #fefefe;
    color: #1d2125;
    font: 20px/30px "Liberation Sans", Arial, sans-serif;
}

.site-header {
    height: 81px;
    display: flex;
    align-items: center;
    padding: 0 37px 0 21px;
    background: #001650;
}

.logo svg {
    width: 346px;
    height: 70px;
}

.logo-text {
    font: italic 700 63px "Liberation Sans", Arial, sans-serif;
    fill: #0b0805;
    stroke: #f0a23c;
    filter: drop-shadow(-9px 5px 4px #888);
}

.site-nav {
    display: flex;
    gap: 22px;
    margin-left: 47px;
    font-weight: 700;
}

.site-nav a {
    color: #fff;
}

.logout {
    margin-left: auto;
    padding-bottom: 7px;
    font-weight: 700;
    color: #ef0520;
}

.edit-mode {
    height: 62px;
    display: flex;
    align-items: center;
    gap: 11px;
    margin-left: 36px;
    padding: 0 0 18px 21px;
    border-left: 2px solid #bfd3f0;
    color: #17509f;
}

.edit-mode input {
    appearance: none;
    position: relative;
    width: 47px;
    height: 26px;
    margin: 6px 0 0;
    border-radius: 13px;
    background: #0f6cbf;
}

.edit-mode input::after {
    content: "";
    position: absolute;
    right: 3px;
    top: 2px;
    width: 22px;
    height: 22px;
    border-radius: 50%;
    background: #fff;
}

.drawer-toggle {
    position: absolute;
    top: 95px;
    right: 15px;
    width: 49px;
    height: 66px;
    display: flex;
    align-items: center;
    justify-content: center;
    border-radius: 33px 0 0 33px;
    background: #dedee6;
    box-shadow: 0 2px 4px rgba(0, 0, 0, 0.15);
}

.drawer-toggle svg {
    width: 16px;
    height: 20px;
    margin-left: 6px;
}

.scrollbar {
    position: absolute;
    top: 81px;
    right: 0;
    width: 2px;
    height: 432px;
    background: #6d6d78;
}

.content {
    max-width: 1043px;
    margin: 74px auto 0;
    position: relative;
    right: 1px;
}

.breadcrumb {
    display: flex;
    gap: 11px;
    color: #6a737b;
}

.activity-title {
    display: flex;
    gap: 11px;
    margin-top: 16px;
}

.activity-title > svg {
    width: 67px;
    height: 67px;
}

.activity-type {
    font-size: 16px;
    line-height: 21px;
    text-transform: uppercase;
    color: #6a737b;
}

h1 {
    margin: 0;
    font-size: 40px;
    line-height: 48px;
}

.secondary-nav {
    display: flex;
    height: 83px;
    margin-top: 16px;
    border-top: 1px solid #e8eaec;
    border-bottom: 2px solid #e8eaec;
}

.secondary-nav > * {
    display: flex;
    align-items: center;
    padding: 0 21px 3px;
}

.secondary-nav .current {
    width: 255px;
    border-bottom: 4px solid #1268b8;
}

.secondary-nav .more {
    gap: 6px;
    margin-left: 1px;
    color: #0b3a66;
    background: #f9f9fb;
    outline: 4px solid #4a8cc8;
}

.more svg {
    width: 12px;
    height: 12px;
}

.activity-header {
    margin-top: 20px;
    padding: 22px 21px 19px;
    background: #fafafa;
}

.activity-header button {
    display: block;
    width: 130px;
    height: 39px;
    border: 1px solid #b2b6b9;
    border-radius: 4px;
    background: #fdfdfd;
    font-size: 18px;
    color: #a0a4a7;
}

.tabs {
    display: flex;
    margin-top: 23px;
    border-bottom: 1px solid #e6e9ec;
}

.tabs a {
    height: 53px;
    display: flex;
    align-items: center;
    gap: 6px;
    padding: 0 21px;
    border: 1px solid transparent;
}

.tabs .current {
    margin-bottom: -1px;
    border-color: #e6e9ec;
    border-bottom-color: #fefefe;
    border-radius: 9px 9px 0 0;
    background: #fefefe;
    color: #495057;
}

.tabs svg {
    width: 20px;
    height: 20px;
}

.tabs .flask {
    width: 18px;
}

.details {
    margin-top: 42px;
}

.details p {
    margin: 0;
}

.details svg {
    display: inline-block;
    width: 20px;
    height: 20px;
    margin-right: 5px;
    vertical-align: -3px;
}

.details .mid {
    width: 18px;
}

.details .small {
    width: 15px;
}

/* screenshot in the description */
.shot {
    width: 532px;
    margin: 21px 0 0 11px;
    padding: 7px 12px 0;
    background: #f1f1f1;
}

.shot-bar {
    height: 60px;
    display: flex;
    align-items: flex-start;
    padding: 13px 14px 0 17px;
    border: 1px solid #d5d5d5;
    border-radius: 12px 12px 0 0;
    background: #ececec;
    font-size: 12px;
    line-height: 18px;
    color: #444;
}

.shot-bar .lights {
    gap: 6px;
    padding-top: 4px;
}

.shot-bar > svg {
    width: 18px;
    height: 18px;
    margin: 1px 8px 0 20px;
}

.profile,
.host {
    display: flex;
    align-items: center;
    justify-content: space-between;
    width: 90px;
    height: 22px;
    padding: 0 6px;
    border: 1px solid #dcdcdc;
    border-radius: 4px;
    font-weight: 700;
}

.host {
    width: 217px;
    margin-left: 6px;
    font-weight: 400;
}

.host em {
    font-style: normal;
}

.profile svg,
.host svg {
    width: 12px;
    height: 12px;
}

.profile .drop {
    width: 8px;
    height: 8px;
}

.chev {
    margin-left: auto;
    font-size: 18px;
}

.status {
    position: absolute;
    left: 4px;
    bottom: 0;
    font: 13px/18px "Noto Sans", sans-serif;
    color: #a5a5a8;
}

.help {
    position: absolute;
    right: 43px;
    bottom: 43px;
    width: 48px;
    height: 48px;
    border-radius: 50%;
    background: #ced1da;
    font-weight: 700;
}

/* Mac dock */
.dock-area {
    height: 58px;
    flex: none;
    padding: 6px 29px 0;
}

.dock {
    height: 47px;
    display: flex;
    justify-content: space-between;
    padding: 0 3px;
    border: 1px solid rgba(200, 205, 195, 0.35);
    border-radius: 12px;
    background: linear-gradient(90deg, #5c6d58, #5f7058 40%, #6b6660 62%, #6b6058 75%, #77644c 85%, #52645a);
}

.item {
    width: 38px;
    position: relative;
    display: flex;
    justify-content: center;
    padding-top: 6px;
}

.item svg {
    width: 30px;
    height: 30px;
}

.item .wide {
    width: 34px;
    height: 34px;
    margin-top: -2px;
}

.running::after {
    content: "";
    position: absolute;
    bottom: 1px;
    left: 17px;
    width: 4px;
    height: 4px;
    border-radius: 50%;
    background: #0a0a0a;
}

.badge {
    position: absolute;
    top: 2px;
    right: 0;
    min-width: 14px;
    height: 14px;
    padding: 0 3px;
    border-radius: 7px;
    background: #ee3034;
    color: #fff;
    font-size: 9px;
    line-height: 14px;
    text-align: center;
}

.divider {
    width: 1px;
    margin: 4px 7px;
    background: #343c35;
}

/* minimised windows */
.win {
    align-items: center;
    padding: 0 0 3px;
}

.win::before {
    content: "";
    width: 34px;
    height: 18px;
    background: #fbfbfb;
}

.h22::before { height: 22px; }
.h26::before { height: 26px; }
.h34::before { height: 34px; }

.lines::before {
    background: repeating-linear-gradient(#f8f8f8 0 3px, #e8e8e8 3px 4px);
}

.blueline::before {
    background: linear-gradient(#fbfbfb 20%, #5b87d8 20%, #5b87d8 28%, #f5f5f8 28%);
}

.dark::before {
    background: #23262b;
}

.item .mini {
    position: absolute;
    right: 1px;
    bottom: 8px;
    width: 12px;
    height: 12px;
}
```
